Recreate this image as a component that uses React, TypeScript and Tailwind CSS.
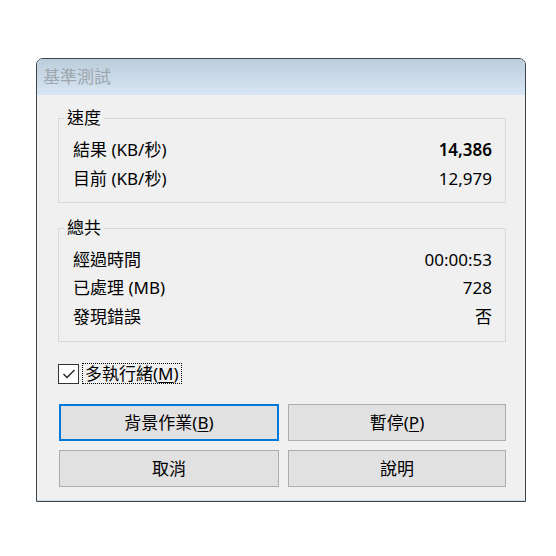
import React from 'react';

const font = { fontFamily: '"Noto Sans", "Noto Sans CJK TC", sans-serif' };

const Row = ({ label, value, bold }: { label: string; value: string; bold?: boolean }) => (
  <div className="flex h-[29px] items-center justify-between">
    <span>{label}</span>
    <span className={bold ? 'font-semibold' : ''}>{value}</span>
  </div>
);

const Button = ({ children, focused }: { children: React.ReactNode; focused?: boolean }) => (
  <button
    className={
      'flex h-[37px] items-center justify-center bg-[#e1e1e1] text-[17px] text-black ' +
      (focused ? 'border-2 border-[#0078d7]' : 'border border-[#adadad]')
    }
  >
    {children}
  </button>
);

export default function App() {
  return (
    <div className="h-[556px] w-[556px] bg-white pl-[36px] pt-[58px]" style={font}>
      <div className="flex h-[444px] w-[490px] flex-col overflow-hidden rounded-t-[7px] border border-[#3f4449] bg-[#f0f0f0]">
        <div className="flex h-[36px] shrink-0 items-center bg-gradient-to-b from-[#bccddc] to-[#d8e6f3] pl-[6px] text-[17px] text-[#9ea6ae]">
          基準測試
        </div>
        <div className="flex flex-1 flex-col border-b border-[#c9dbef] pl-[21px] pr-[19px] text-[17px] text-black">
          <fieldset className="mt-[12px] border border-[#d9d9d9] pb-[9px] pl-[14px] pr-[13px]">
            <legend className="-ml-[9px] px-[3px] leading-[22px]">速度</legend>
            <div className="pt-[6px]">
              <Row label="結果 (KB/秒)" value="14,386" bold />
              <Row label="目前 (KB/秒)" value="12,979" />
            </div>
          </fieldset>
          <fieldset className="mt-[14px] border border-[#d9d9d9] pb-[10px] pl-[14px] pr-[13px]">
            <legend className="-ml-[9px] px-[3px] leading-[22px]">總共</legend>
            <div className="pt-[6px]">
              <Row label="經過時間" value="00:00:53" />
              <div className="-mt-[1px]">
                <Row label="已處理 (MB)" value="728" />
              </div>
              <Row label="發現錯誤" value="否" />
            </div>
          </fieldset>
          <div className="mt-[21px] flex h-[21px] items-center">
            <div className="flex h-[20px] w-[21px] items-center justify-center border border-[#333] bg-white">
              <svg width="14" height="12" viewBox="0 0 14 12">
                <polyline points="1.5,6 5,9.5 12.5,2" fill="none" stroke="#222" strokeWidth="1.4" />
              </svg>
            </div>
            <div className="ml-[3px] flex h-[21px] items-center border border-dotted border-black px-[2px] leading-none">
              多執行緒(<span className="underline underline-offset-2">M</span>)
            </div>
          </div>
          <div className="mt-[20px] grid grid-cols-[220px_218px] gap-x-[9px] gap-y-[9px] pl-[1px]">
            <Button focused>
              背景作業(<span className="underline underline-offset-2">B</span>)
            </Button>
            <Button>
              暫停(<span className="underline underline-offset-2">P</span>)
            </Button>
            <Button>取消</Button>
            <Button>說明</Button>
          </div>
        </div>
      </div>
    </div>
  );
}
